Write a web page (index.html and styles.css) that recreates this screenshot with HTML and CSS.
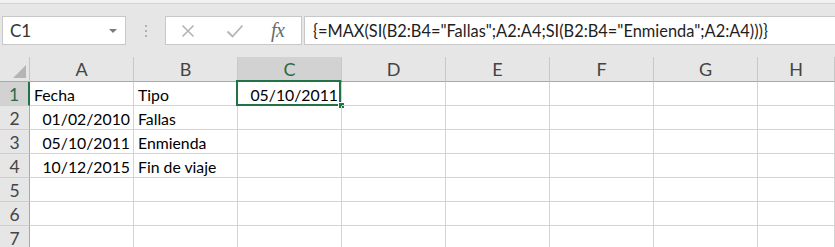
FILE: index.html
```html
<!DOCTYPE html>
<html lang="es">
<head>
<meta charset="utf-8">
<title>Excel</title>
<link rel="stylesheet" href="styles.css">
</head>
<body>
<div class="toolbar">
  <div class="topstrip"></div>
  <div class="bar">
    <div class="namebox"><span class="name">C1</span><span class="caret"></span></div>
    <div class="grip"><i></i><i></i><i></i></div>
    <div class="fxbox">
      <svg class="ico-x" width="14" height="14" viewBox="0 0 14 14"><path d="M1.5 1.5 L12.5 12.5 M12.5 1.5 L1.5 12.5" stroke="#b4b4b4" stroke-width="1.6" fill="none"/></svg>
      <svg class="ico-check" width="18" height="14" viewBox="0 0 18 14"><path d="M1.5 7.5 L6.5 12.5 L16.5 1.5" stroke="#b4b4b4" stroke-width="1.8" fill="none"/></svg>
      <span class="fx">fx</span>
    </div>
    <div class="formula">{=MAX(SI(B2:B4="Fallas";A2:A4;SI(B2:B4="Enmienda";A2:A4)))}</div>
  </div>
</div>
<div class="sheet">
  <div class="corner"><span class="tri"></span></div>
  <div class="ch">A</div><div class="ch">B</div><div class="ch sel">C</div><div class="ch">D</div><div class="ch">E</div><div class="ch">F</div><div class="ch">G</div><div class="ch">H</div>

  <div class="rh sel">1</div>
  <div class="c">Fecha</div><div class="c">Tipo</div><div class="c r active">05/10/2011<span class="selbox"></span><span class="handle"></span></div><div class="c"></div><div class="c"></div><div class="c"></div><div class="c"></div><div class="c"></div>

  <div class="rh">2</div>
  <div class="c r">01/02/2010</div><div class="c">Fallas</div><div class="c"></div><div class="c"></div><div class="c"></div><div class="c"></div><div class="c"></div><div class="c"></div>

  <div class="rh">3</div>
  <div class="c r">05/10/2011</div><div class="c">Enmienda</div><div class="c"></div><div class="c"></div><div class="c"></div><div class="c"></div><div class="c"></div><div class="c"></div>

  <div class="rh">4</div>
  <div class="c r">10/12/2015</div><div class="c">Fin de viaje</div><div class="c"></div><div class="c"></div><div class="c"></div><div class="c"></div><div class="c"></div><div class="c"></div>

  <div class="rh">5</div>
  <div class="c"></div><div class="c"></div><div class="c"></div><div class="c"></div><div class="c"></div><div class="c"></div><div class="c"></div><div class="c"></div>

  <div class="rh">6</div>
  <div class="c"></div><div class="c"></div><div class="c"></div><div class="c"></div><div class="c"></div><div class="c"></div><div class="c"></div><div class="c"></div>

  <div class="rh">7</div>
  <div class="c"></div><div class="c"></div><div class="c"></div><div class="c"></div><div class="c"></div><div class="c"></div><div class="c"></div><div class="c"></div>
</div>
</body>
</html>
```

FILE: styles.css
```css
html, body {
  margin: 0;
  padding: 0;
  background: #e6e6e6;
  overflow: hidden;
}
body {
  width: 835px;
  height: 247px;
  font-family: Lato, "Open Sans", sans-serif;
}
.toolbar {
  height: 57px;
  background: #e6e6e6;
}
.topstrip {
  height: 3px;
  background: #f1f1f1;
  border-bottom: 1px solid #d4d4d4;
}
.bar {
  display: flex;
  height: 29px;
  margin-top: 12px;
}
.namebox {
  margin-left: 2px;
  width: 124px;
  background: #fff;
  border: 1px solid #c8c8c8;
  display: flex;
  align-items: center;
  justify-content: space-between;
  padding: 0 8px 0 7px;
  box-sizing: border-box;
}
.name {
  font-size: 17px;
  color: #333;
}
.caret {
  width: 0;
  height: 0;
  border-left: 4px solid transparent;
  border-right: 4px solid transparent;
  border-top: 4px solid #7a7a7a;
}
.grip {
  width: 39px;
  display: flex;
  flex-direction: column;
  align-items: center;
  justify-content: center;
  gap: 3px;
}
.grip i {
  display: block;
  width: 2px;
  height: 2px;
  background: #b2b2b2;
}
.fxbox {
  width: 137px;
  box-sizing: border-box;
  background: #fff;
  border: 1px solid #c8c8c8;
  display: flex;
  align-items: center;
}
.ico-x {
  margin-left: 15px;
}
.ico-check {
  margin-left: 31px;
}
.fx {
  margin-left: 27px;
  font-family: "Liberation Serif", serif;
  font-style: italic;
  font-size: 20px;
  color: #6a6a6a;
  letter-spacing: -0.5px;
}
.formula {
  margin-left: 2px;
  flex: 1;
  background: #fff;
  border: 1px solid #c8c8c8;
  border-right: none;
  padding-left: 8px;
  font-size: 16.4px;
  color: #1e1e1e;
  line-height: 27px;
  white-space: nowrap;
  overflow: hidden;
}
.sheet {
  display: grid;
  grid-template-columns: 30px repeat(7, 104px) 1fr;
  grid-template-rows: 25px repeat(7, 24px);
  background: #fff;
}
.corner {
  background: #e6e6e6;
  border-right: 1px solid #c6c6c6;
  border-bottom: 1px solid #a8a8a8;
  position: relative;
}
.tri {
  position: absolute;
  right: 3px;
  bottom: 3px;
  width: 0;
  height: 0;
  border-left: 13px solid transparent;
  border-bottom: 13px solid #b5b5b5;
}
.ch {
  background: #e6e6e6;
  border-right: 1px solid #c8c8c8;
  border-bottom: 1px solid #a8a8a8;
  color: #444;
  font-size: 18px;
  text-align: center;
  line-height: 25px;
}
.ch.sel {
  background: #d2d2d2;
  border-bottom: 2px solid #217346;
  color: #2a6a48;
}
.rh {
  background: #e6e6e6;
  border-right: 1px solid #a8a8a8;
  border-bottom: 1px solid #cfcfcf;
  color: #444;
  font-size: 17.5px;
  text-align: center;
  line-height: 25px;
}
.rh.sel {
  background: #d2d2d2;
  border-right: 2px solid #217346;
  color: #2a6a48;
}
.c {
  border-right: 1px solid #d4d4d4;
  border-bottom: 1px solid #d4d4d4;
  font-size: 15.8px;
  color: #000;
  padding: 0 3px 0 4px;
  line-height: 25px;
  white-space: nowrap;
  position: relative;
}
.c.r {
  text-align: right;
}
.selbox {
  position: absolute;
  left: -2px;
  top: -2px;
  width: 101px;
  height: 22px;
  border: 2px solid #217346;
}
.handle {
  position: absolute;
  right: -4px;
  bottom: -4px;
  width: 5px;
  height: 5px;
  background: #217346;
  border: 1px solid #fff;
}
```
